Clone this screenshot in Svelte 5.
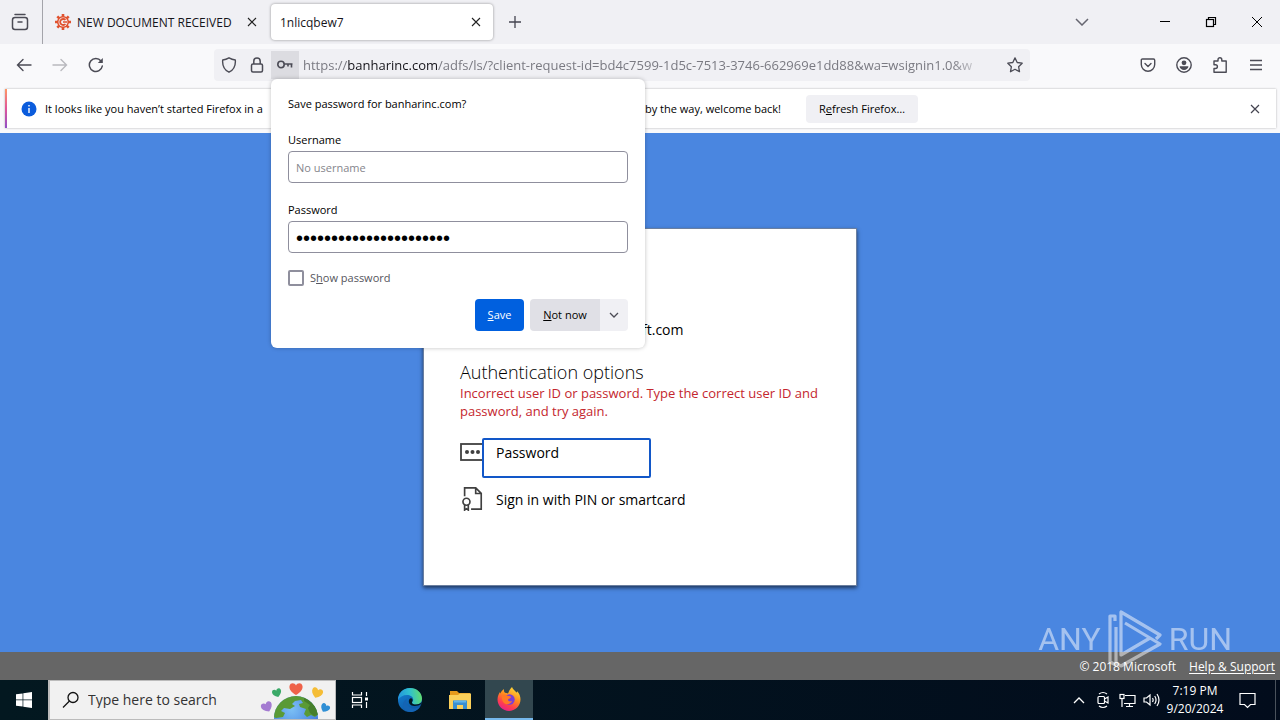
<script>
  let show = $state(false);
  let username = $state('');
  let secret = $state('x'.repeat(22));
</script>

<div class="screen">
  <header class="tabs">
    <button class="view" aria-label="Firefox View">
      <svg width="18" height="18" viewBox="0 0 18 18" fill="none" stroke="#4b4b55" stroke-width="1.5" stroke-linecap="round"><path d="M4 1.5h10" /><rect x="1.5" y="4.500" width="15" height="12" rx="2.500" /><path d="M7 9h4" /></svg>
    </button>
    <div class="tab">
      <svg width="16" height="16" viewBox="0 0 16 16"><g stroke="#e0522f" stroke-width="2.600"><path d="M8 0v16M0 8h16M2.300 2.300l11.400 11.400M13.700 2.300L2.300 13.700" /></g><circle cx="8" cy="8" r="6" fill="#e0522f" /><circle cx="8" cy="8" r="4.500" fill="#f4f0f2" /><path d="M10.400 6A3 3 0 1 0 10.400 10" fill="none" stroke="#e0522f" stroke-width="1.800" /><path d="M8 8h4" stroke="#e0522f" stroke-width="1.500" /></svg>
      <span class="title">NEW DOCUMENT RECEIVED</span>
      <button class="close" aria-label="Close tab"><svg width="10" height="10" viewBox="0 0 10 10" stroke="#222" stroke-width="1.100"><path d="M1 1l8 8M9 1L1 9" /></svg></button>
    </div>
    <div class="tab active">
      <span class="title">1nlicqbew7</span>
      <button class="close" aria-label="Close tab"><svg width="10" height="10" viewBox="0 0 10 10" stroke="#222" stroke-width="1.100"><path d="M1 1l8 8M9 1L1 9" /></svg></button>
    </div>
    <button class="plus" aria-label="New tab"><svg width="12" height="12" viewBox="0 0 12 12" stroke="#444450" stroke-width="1.300"><path d="M6 0v12M0 6h12" /></svg></button>
    <button class="list" aria-label="List all tabs"><svg width="14" height="8" viewBox="0 0 14 8" fill="none" stroke="#666670" stroke-width="1.500"><path d="M1 1l6 6 6-6" /></svg></button>
    <button class="win" aria-label="Minimize"><svg width="12" height="12" viewBox="0 0 12 12"><path d="M1 5.500h10" stroke="#000" /></svg></button>
    <button class="win" aria-label="Restore"><svg width="12" height="12" viewBox="0 0 12 12" fill="none" stroke="#000" stroke-width="1.200"><rect x="1.500" y="3.500" width="7" height="7" /><path d="M3.500 3V1.500h7v7H9" /></svg></button>
    <button class="win" aria-label="Close window"><svg width="12" height="12" viewBox="0 0 12 12" stroke="#000"><path d="M1 1l10 10M11 1L1 11" /></svg></button>
  </header>

  <nav class="toolbar">
    <button class="tool" aria-label="Back"><svg width="16" height="16" viewBox="0 0 16 16" fill="none" stroke="#4b4b55" stroke-width="1.400" stroke-linecap="round"><path d="M15 8H1.500M7 2.500L1.500 8 7 13.500" /></svg></button>
    <button class="tool" aria-label="Forward"><svg width="16" height="16" viewBox="0 0 16 16" fill="none" stroke="#b9b9be" stroke-width="1.400" stroke-linecap="round"><path d="M1 8h13.500M9 2.500L14.500 8 9 13.500" /></svg></button>
    <button class="tool" aria-label="Reload"><svg width="16" height="16" viewBox="0 0 16 16" fill="none" stroke="#4b4b55" stroke-width="1.500" stroke-linecap="round"><path d="M14.300 9A6.500 6.500 0 1 1 13 4" /><path d="M14.800 1v5h-5z" fill="#4b4b55" stroke="none" /></svg></button>
    <div class="urlbar">
      <button class="mini" aria-label="Tracking protection"><svg width="16" height="16" viewBox="0 0 16 16" fill="none" stroke="#4b4b55" stroke-width="1.400" stroke-linejoin="round"><path d="M8 .800C10 2 12 2.700 14.300 3 14.800 8.500 12.500 13 8 15.200 3.500 13 1.200 8.500 1.700 3 4 2.700 6 2 8 .800z" /></svg></button>
      <button class="mini" aria-label="Connection secure"><svg width="16" height="16" viewBox="0 0 16 16" fill="none" stroke="#4b4b55" stroke-width="1.500"><rect x="2.500" y="7" width="11" height="8" rx="1.500" /><path d="M4.800 7V4.200a3.200 3.200 0 0 1 6.400 0V7" /></svg></button>
      <div class="anchor">
        <button class="mini key" aria-label="Saved password"><svg width="16" height="16" viewBox="0 0 16 16" fill="none" stroke="#4b4b55" stroke-width="1.600"><circle cx="4" cy="7.500" r="3.200" /><path d="M7.200 7H15.500M11 7v2.500M14.500 7V10.500" /></svg></button>
        <form class="popup" onsubmit={(e) => e.preventDefault()}>
          <h2>Save password for banharinc.com?</h2>
          <label for="user">Username</label>
          <input id="user" class="field" placeholder="No username" bind:value={username} />
          <label for="pass">Password</label>
          <input id="pass" class="field dots" type={show ? 'text' : 'password'} autocomplete="off" bind:value={secret} />
          <label class="check"><input type="checkbox" bind:checked={show} /><span>S<u>h</u>ow password</span></label>
          <div class="actions">
            <button class="save"><u>S</u>ave</button>
            <div class="split">
              <button class="later" type="button"><u>N</u>ot now</button>
              <button class="more" type="button" aria-label="More options"><svg width="10" height="6" viewBox="0 0 10 6" fill="none" stroke="#4b4b55" stroke-width="1.300"><path d="M1 1l4 4 4-4" /></svg></button>
            </div>
          </div>
        </form>
      </div>
      <div class="url">https://<b>banharinc.com</b>/adfs/ls/?client-request-id=bd4c7599-1d5c-7513-3746-662969e1dd88&amp;wa=wsignin1.0&amp;w</div>
      <button class="star" aria-label="Bookmark this page"><svg width="16" height="16" viewBox="0 0 16 16" fill="none" stroke="#4b4b55" stroke-width="1.300" stroke-linejoin="round"><path d="M8 .900l2.200 4.600 5 .700-3.600 3.500.900 5L8 12.300l-4.500 2.400.900-5L.800 6.200l5-.700z" /></svg></button>
    </div>
    <button class="tool" aria-label="Pocket"><svg width="16" height="16" viewBox="0 0 16 16" fill="none" stroke="#4b4b55" stroke-width="1.400" stroke-linecap="round" stroke-linejoin="round"><path d="M2.500 2h11c.700 0 1.200.500 1.200 1.200V7.500a6.700 6.700 0 0 1-13.400 0V3.200C1.300 2.500 1.800 2 2.500 2z" /><path d="M5 6.500l3 3 3-3" /></svg></button>
    <button class="tool" aria-label="Account"><svg width="16" height="16" viewBox="0 0 16 16"><circle cx="8" cy="8" r="7.200" fill="none" stroke="#4b4b55" stroke-width="1.400" /><circle cx="8" cy="5.800" r="2.400" fill="#4b4b55" /><path d="M3.600 9.300h8.800c0 2-2 3.700-4.400 3.700s-4.400-1.700-4.400-3.700z" fill="#4b4b55" /></svg></button>
    <button class="tool" aria-label="Extensions"><svg width="16" height="16" viewBox="0 0 16 16" fill="none" stroke="#4b4b55" stroke-width="1.400" stroke-linejoin="round"><path d="M6 4V2.700a1.900 1.900 0 0 1 3.800 0V4h4.400v11.200H2V11.500h1.500a1.900 1.900 0 0 0 0-3.800H2V4z" /></svg></button>
    <button class="tool" aria-label="Menu"><svg width="14" height="12" viewBox="0 0 14 12" stroke="#4b4b55" stroke-width="1.400"><path d="M1 1.500h12M1 6h12M1 10.500h12" /></svg></button>
  </nav>

  <div class="notice-wrap">
    <div class="notice">
      <svg width="16" height="16" viewBox="0 0 16 16"><circle cx="8" cy="8" r="7.500" fill="#0b5cdc" /><path d="M8 7v5M8 4v1.600" stroke="#fff" stroke-width="1.400" /></svg>
      <p><span class="lead">It looks like you haven’t started Firefox in a</span><span class="tail">by the way, welcome back!</span></p>
      <button class="refresh">R<u>e</u>fresh Firefox…</button>
      <button class="dismiss" aria-label="Dismiss"><svg width="10" height="10" viewBox="0 0 10 10" stroke="#444450" stroke-width="1.200"><path d="M1 1l8 8M9 1L1 9" /></svg></button>
    </div>
  </div>

  <div class="page">
    <main>
      <section class="card">
        <p class="org">ft.com</p>
        <h1>Authentication options</h1>
        <p class="error">Incorrect user ID or password. Type the correct user ID and password, and try again.</p>
        <div class="option">
          <svg width="24" height="24" viewBox="0 0 24 24"><rect x="1" y="4" width="24" height="16" fill="none" stroke="#404040" stroke-width="1.800" /><g fill="#404040"><circle cx="7" cy="12" r="2" /><circle cx="12.500" cy="12" r="2" /><circle cx="18" cy="12" r="2" /></g></svg>
          <button class="choice focus">Password</button>
        </div>
        <div class="option">
          <svg width="24" height="24" viewBox="0 0 24 26" fill="none" stroke="#404040" stroke-width="1.800"><path d="M4 10V1h12l6 6v17H11M16 1v6h6" /><circle cx="6" cy="16" r="3.800" /><path d="M4 19v6l2-1.500L8 25v-6" /></svg>
          <button class="choice">Sign in with PIN or smartcard</button>
        </div>
      </section>
    </main>
    <footer><span>© 2018 Microsoft</span><a href="#help">Help &amp; Support</a></footer>
    <div class="mark" aria-hidden="true">
      <span>ANY</span>
      <svg width="56" height="60" viewBox="0 0 56 60" fill="none" stroke="#fff" stroke-width="3.200" stroke-linejoin="round"><path d="M8 12V7H3v46l6 3M49 30l4-4L14 3v43l29-17M18 14l35 21-39 22-5-3V18" /></svg>
      <span>RUN</span>
    </div>
  </div>

  <div class="taskbar">
    <button class="start" aria-label="Start"><svg width="16" height="16" viewBox="0 0 16 16" fill="#fff"><path d="M0 2.300L6.600 1.400v6.200H0zM7.300 1.300L16 0v7.600H7.300zM0 8.300h6.600v6.300L0 13.700zM7.300 8.300H16V16l-8.700-1.300z" /></svg></button>
    <label class="search">
      <svg width="18" height="18" viewBox="0 0 18 18" fill="none" stroke="#111" stroke-width="1.300"><circle cx="11" cy="6.500" r="5" /><path d="M7.500 10L1 16.500" /></svg>
      <input placeholder="Type here to search" aria-label="Type here to search" />
      <svg class="earth" width="72" height="38" viewBox="0 0 72 38">
        <defs>
          <path id="heart" d="M0 6C-5 3-7 0-6.500-3-5.500-7-1-6 0-3.500 1-6 5.500-7 6.500-3 7 0 5 3 0 6z" />
          <radialGradient id="sea" cx=".4" cy=".3" r=".7"><stop offset="0" stop-color="#7cc0f5" /><stop offset="1" stop-color="#3f78dc" /></radialGradient>
          <clipPath id="globe"><circle cx="37" cy="37" r="22" /></clipPath>
        </defs>
        <circle cx="37" cy="37" r="22" fill="url(#sea)" />
        <g clip-path="url(#globe)"><path d="M16 26c4-8 10-12 19-12 12 0 20 8 25 18l-4 4-4-2-4 2-3-3 2-5-6-2-1-3 4-1-2-3-6 1-3 3 3 2-5 3-6-1-3 3 4 2-2 4-7 1-5-2z" fill="#5a9a35" /><path d="M45 17c8 3 13 9 14 17l-4 1-4-3-2-5 2-3-6-4z" fill="#467f2b" /></g>
        <use href="#heart" transform="translate(37 8)" fill="#ef6249" />
        <use href="#heart" transform="translate(18 12) rotate(-18) scale(.7)" fill="#3aa967" />
        <use href="#heart" transform="translate(58 12) rotate(20) scale(.85)" fill="#f5bd36" />
        <use href="#heart" transform="translate(8 26) rotate(-25) scale(.85)" fill="#a47bd1" />
        <use href="#heart" transform="translate(66 27) rotate(30) scale(.7)" fill="#2f8fd5" />
      </svg>
    </label>
    <button class="app" aria-label="Task View"><svg width="18" height="16" viewBox="0 0 18 16" fill="none" stroke="#fff" stroke-width="1.200"><path d="M1.500 0v3h9V0M1.500 16v-3h9v3M15.500 0v4M15.500 10v6" /><rect x="1.500" y="5.500" width="9" height="5" /><path d="M14 7h3" stroke-width="3" /></svg></button>
    <button class="app" aria-label="Edge">
      <svg width="24" height="24" viewBox="0 0 24 24">
        <defs>
          <linearGradient id="edgeTop" x1="0" y1=".5" x2="1" y2=".4"><stop offset="0" stop-color="#2294dd" /><stop offset=".5" stop-color="#2fc0cf" /><stop offset="1" stop-color="#63dd6c" /></linearGradient>
          <linearGradient id="edgeBase" x1="0" y1="0" x2=".6" y2="1"><stop offset="0" stop-color="#1683d6" /><stop offset="1" stop-color="#0c58a5" /></linearGradient>
        </defs>
        <circle cx="12" cy="12" r="12" fill="url(#edgeBase)" />
        <path d="M0 12C0 5 5 0 12 0c7 0 12 5 12 10.500 0 4-3 6-6 6-2.500 0-4-.800-4-1.800 0-.900 1.200-1.200 1.200-3.200C15.200 8.500 12 7 9 7c-4 0-7.500 2-9 5z" fill="url(#edgeTop)" />
        <path d="M9 11c-2 4 1 9 6 9.500 3 .300 5.500-1 7.500-2.500-2 3.500-5.500 6-10 6C7 24 5 20 5 17c0-3 2-5.500 4-6z" fill="#1464b4" />
        <path d="M11.500 11c-1.500 2.500-.500 6 3.500 6.800 3 .600 6-.300 8.200-1.800L24 14c-2 1.800-4 2.500-6 2.500-2.500 0-4-.800-4-1.800 0-1.500 1-2 .500-3.200-.500-1.300-2-1.500-3-.500z" fill="#031820" />
      </svg>
    </button>
    <button class="app" aria-label="File Explorer"><svg width="22" height="18" viewBox="0 0 22 18"><path d="M1 0h7l2 2h11v4H1z" fill="#e69a1c" /><path d="M0 4h9l2-1.500h11V18H0z" fill="#fbd05a" /><path d="M4 18V9.500h14V18h-4v-4H8v4z" fill="#3a8fd0" /><path d="M5 9.500h12v2H5z" fill="#62b5ea" /></svg></button>
    <button class="app current" aria-label="Firefox">
      <svg width="24" height="24" viewBox="0 0 24 24">
        <defs>
          <linearGradient id="fox" x1=".8" y1="0" x2=".3" y2="1"><stop offset="0" stop-color="#ffe23a" /><stop offset=".45" stop-color="#ff8a1f" /><stop offset=".75" stop-color="#ff3d4f" /><stop offset="1" stop-color="#e5208d" /></linearGradient>
        </defs>
        <path d="M15 0c1 2.500 3 3.500 4.500 5.500C20.500 5.300 20 4 20 4c2.500 2.500 3.500 5.500 3.500 8.500C23.500 19 18 24 12 24S.500 19 .500 12.500C.500 9 2 6.500 3 5c0 0 .200 1 .500 1.500C4 4.500 6 2.500 7 2c-.300 1.500.200 3 1 3.800 1 .200 2 .200 3 .700C12 4 13 2 15 0z" fill="url(#fox)" />
        <circle cx="12.500" cy="12.500" r="5.200" fill="#7a3fd6" />
        <path d="M5 8c2-1 4-.500 6 1 1.500 0 3 .200 3 1-.500 1.500-2.500 1.500-3 2.500 0 2 2 2.500 4 1.500-1 3-5.500 4.500-8 2C5 14 4.500 11 5 8z" fill="#ff7a25" />
      </svg>
    </button>
    <div class="tray">
      <button aria-label="Show hidden icons"><svg width="12" height="7" viewBox="0 0 12 7" fill="none" stroke="#fff" stroke-width="1.300"><path d="M1 6l5-5 5 5" /></svg></button>
      <button aria-label="Meet now"><svg width="12" height="18" viewBox="0 0 12 18" fill="none" stroke="#fff" stroke-width="1.200"><path d="M2 3Q6 0 10 3M2 15q4 3 8 0" /><rect x="1" y="5.500" width="6.500" height="7" rx="1" /><path d="M7.500 8L11 6v6L7.500 10" /></svg></button>
      <button aria-label="Network"><svg width="17" height="15" viewBox="0 0 17 15" fill="none" stroke="#fff" stroke-width="1.200"><path d="M6 2.500h10v8H5M10.500 10.500v3M7 13.500h7M3 6v8" /><rect x="1" y="1.500" width="4" height="4" /></svg></button>
      <button aria-label="Volume"><svg width="17" height="14" viewBox="0 0 17 14" fill="none" stroke="#fff" stroke-width="1.200"><path d="M1 5h2.500L7 2v10L3.500 9H1zM9.500 5q1.300 2 0 4M11.700 3q2.700 4 0 8M14 1q4 6 0 12" /></svg></button>
      <div class="clock"><span>7:19 PM</span><span>9/20/2024</span></div>
      <button class="bell" aria-label="Notifications"><svg width="17" height="17" viewBox="0 0 17 17" fill="none" stroke="#fff" stroke-width="1.200"><path d="M1 1.500h15v11h-4.500L8.500 15.500 5.500 12.500H1z" /></svg></button>
    </div>
  </div>
</div>

<style>
  :global(body) { margin: 0; }
  .screen, .screen * { box-sizing: border-box; }
  .screen { display: flex; flex-direction: column; min-height: 100vh; font-family: "Open Sans", "Noto Sans", sans-serif; font-size: 12px; line-height: 16px; color: #15141a; }
  button, input { font: inherit; color: inherit; }
  button { display: flex; align-items: center; justify-content: center; border: 0; padding: 0; background: none; white-space: pre; }
  svg { flex: none; }
  h1, h2, p { margin: 0; font-weight: 400; }

  .tabs { display: flex; align-items: center; height: 44px; background: #f0f0f4; }
  .view { width: 43px; height: 44px; padding-right: 2px; border-right: 1px solid #a4a4aa; }
  .tab { display: flex; align-items: center; gap: 6px; width: 226px; height: 36px; padding: 0 8px 0 12px; border-radius: 4px; }
  .tab.active { width: 222px; margin: 0 8px 0 2px; padding-left: 9px; background: #fff; box-shadow: 0 0 3px rgba(0, 0, 0, 0.4); }
  .title { flex: 1; white-space: nowrap; line-height: 18px; padding-top: 2px; }
  .close { width: 18px; height: 24px; }
  .plus { width: 28px; height: 28px; }
  .list { width: 36px; height: 36px; margin: 0 42px 0 auto; }
  .win { width: 46px; height: 44px; }

  .toolbar { display: flex; align-items: center; height: 42px; padding: 0 6px; background: #f9f9fb; }
  .tool { width: 36px; height: 36px; }
  .urlbar { display: flex; align-items: center; flex: 1; min-width: 0; height: 32px; margin: 0 100px; padding-left: 1px; background: #f0f0f4; border-radius: 4px; }
  .mini { width: 28px; height: 28px; }
  .key { background: #dcdce1; }
  .anchor { position: relative; }
  .url { flex: 1; min-width: 0; margin-left: 4px; overflow: hidden; white-space: nowrap; font-size: 13px; line-height: 20px; color: #7a7a82; mask-image: linear-gradient(to left, transparent 16px, #000 48px); }
  .url b { font-weight: 400; color: #15141a; }
  .star { width: 30px; height: 30px; }

  .popup { position: absolute; z-index: 5; top: 28px; left: 0; display: flex; flex-direction: column; width: 374px; padding: 17px; background: #fff; border-radius: 6px; box-shadow: 0 0 4px rgba(0, 0, 0, 0.25); font-size: 11px; color: #000; }
  .popup h2 { margin-bottom: 20px; font-size: 11px; line-height: 16px; }
  .popup label { margin-bottom: 3px; }
  .field { height: 32px; margin-bottom: 19px; padding: 0 7px; border: 1px solid #8f8f9d; border-radius: 4px; background: #fff; outline: 0; }
  .field::placeholder { color: #85858c; opacity: 1; }
  .dots { margin-bottom: 17px; padding-top: 2px; font-family: "Liberation Sans", sans-serif; font-size: 20px; }
  .popup .check { display: flex; align-items: center; gap: 6px; margin-bottom: 13px; color: #55555c; }
  .check input { appearance: none; width: 16px; height: 16px; margin: 0; border: 2px solid #8f8f9d; border-radius: 2px; background: #fff; }
  .check input:checked { background: #0060df; }
  .actions { display: flex; justify-content: flex-end; gap: 6px; }
  .save { width: 49px; height: 32px; border-radius: 4px; background: #0060df; color: #fff; }
  .split { display: flex; overflow: hidden; border-radius: 4px; }
  .later { width: 70px; height: 32px; background: #e0e0e6; }
  .more { width: 28px; height: 32px; background: #f0f0f4; }

  .notice-wrap { padding: 3px 4px 5px 5px; background: #f9f9fb; }
  .notice { display: flex; align-items: center; height: 39px; padding: 0 7px 0 14px; border-left: 2px solid; border-image: linear-gradient(#ff9a62, #e0559a, #8c4fc8) 1; background: #fff; box-shadow: 0 0 2px rgba(0, 0, 0, 0.3); font-size: 11px; color: #000; }
  .notice p { display: flex; margin: 0 18px 0 8px; white-space: nowrap; }
  .lead { width: 600px; }
  .tail { min-width: 143px; }
  .refresh { width: 112px; height: 28px; border-radius: 4px; background: #f0f0f4; }
  .dismiss { width: 28px; height: 28px; margin-left: auto; }

  .page { position: relative; display: flex; flex: 1; flex-direction: column; background: #4a86e0; }
  main { display: grid; flex: 1; place-items: center; padding-top: 28px; }
  .card { width: 434px; min-height: 358px; padding: 91px 24px 32px 36px; background: #fff; border: 1px solid #6b7f9f; box-shadow: 0 2px 4px rgba(0, 0, 0, 0.6); color: #000; }
  .org { padding-left: 182px; font-size: 14px; line-height: 20px; }
  h1 { margin-top: 20px; font-size: 18px; font-weight: 300; line-height: 24px; }
  .error { color: #c4262e; font-size: 13px; line-height: 18px; }
  .option { display: flex; align-items: flex-start; height: 47px; }
  .error + .option { margin-top: 20px; }
  .choice { justify-content: flex-start; height: 26px; padding: 0 12px; font-size: 14px; line-height: 20px; }
  .focus { z-index: 1; align-items: flex-start; width: 169px; height: 40px; margin: -2px 0 0 -2px; padding: 5px 14px; background: #fff; outline: 2px solid #1257c8; outline-offset: -2px; border-radius: 2px; }
  footer { display: flex; align-items: center; justify-content: flex-end; gap: 13px; height: 28px; padding: 2px 5px 0 0; background: #666; color: #fff; font-size: 12px; }
  footer a { color: #fff; text-underline-offset: 2px; }
  .mark { position: absolute; right: 48px; bottom: 11px; display: flex; align-items: center; gap: 6px; color: #fff; opacity: 0.5; font-family: Roboto, sans-serif; font-size: 32px; line-height: 32px; }

  .taskbar { display: flex; height: 40px; background: linear-gradient(90deg, #031820, #020c1c); color: #fff; }
  .start { width: 48px; }
  .search { display: flex; align-items: center; width: 288px; padding-left: 12px; border: 1px solid #bbb; border-width: 1px 1px 1px 2px; background: #f1f1f1; color: #333; }
  .search input { flex: 1; min-width: 0; margin-left: 8px; padding: 0; border: 0; background: none; outline: 0; font-size: 14px; }
  .search input::placeholder { color: #333; opacity: 1; }
  .earth { margin-right: 4px; }
  .app { width: 48px; height: 40px; margin-right: 2px; }
  .current { background: #32474f; border-bottom: 2px solid #76b9ed; margin-left: -1px; }
  .tray { display: flex; align-items: center; margin: 0 4px 0 auto; border-right: 1px solid #4a525c; }
  .tray button { width: 24px; height: 40px; }
  .clock { display: flex; flex-direction: column; align-items: center; width: 64px; font-size: 12px; line-height: 18px; }
  .tray .bell { width: 40px; margin-right: 8px; }
</style>
